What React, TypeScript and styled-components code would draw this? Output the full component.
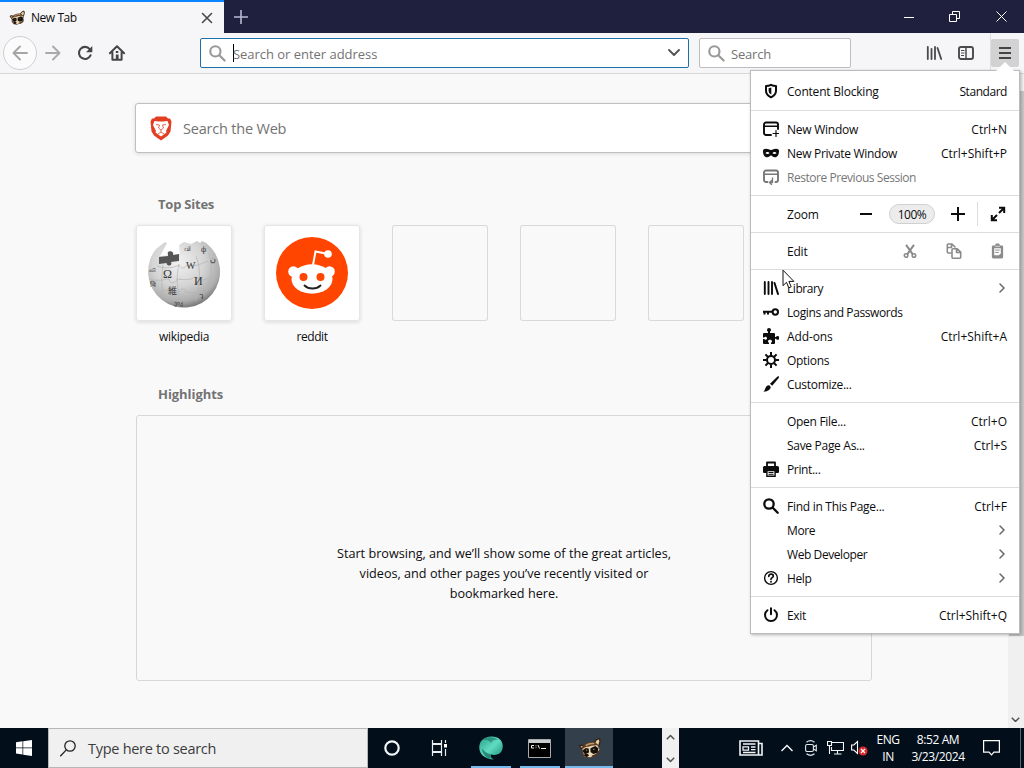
import React from "react";
import styled, { createGlobalStyle } from "styled-components";

const Global = createGlobalStyle`
  * { box-sizing: border-box; }
  html, body { margin: 0; padding: 0; overflow: hidden; }
  body { font-family: "Open Sans", "Noto Sans", sans-serif; font-size: 12px; color: #0c0c0d; }
  svg { display: block; flex: none; }
`;

const Screen = styled.div`
  position: relative;
  width: 1024px;
  height: 768px;
  display: flex;
  flex-direction: column;
  background: #f9f9fa;
  overflow: hidden;
`;

const Label = styled.span<{ $track?: number }>`
  white-space: nowrap;
  letter-spacing: ${(p) => p.$track ?? 0}px;
`;

/* ---------- tab strip ---------- */
const TabStrip = styled.header`
  display: flex;
  height: 33px;
  flex: none;
  background: #1e203d;
`;
const Tab = styled.div`
  width: 224px;
  display: flex;
  align-items: center;
  padding: 0 11px 0 9px;
  border-top: 2px solid #0a84ff;
  background: #f6f6f8;
`;
const TabTitle = styled(Label)`
  flex: 1;
  margin-left: 6px;
`;
const NewTab = styled.div`
  width: 33px;
  display: grid;
  place-items: center;
`;
const WindowButtons = styled.div`
  margin-left: auto;
  display: flex;
`;
const WindowButton = styled.div`
  width: 46px;
  display: grid;
  place-items: center;
`;

/* ---------- navigation bar ---------- */
const NavBar = styled.nav`
  display: flex;
  align-items: center;
  height: 41px;
  flex: none;
  padding: 0 5px 0 3px;
  background: #f6f6f8;
  border-bottom: 1px solid #d8d8da;
`;
const BackButton = styled.div`
  width: 34px;
  height: 34px;
  border: 1px solid #cfcfd1;
  border-radius: 50%;
  display: grid;
  place-items: center;
  background: #fbfbfc;
`;
const NavButton = styled.div`
  width: 32px;
  height: 28px;
  display: grid;
  place-items: center;
`;
const Field = styled.div<{ $width: number; $left: number; $focused?: boolean }>`
  width: ${(p) => p.$width}px;
  height: 30px;
  margin-left: ${(p) => p.$left}px;
  display: flex;
  align-items: center;
  padding: 0 8px;
  border: 1px solid ${(p) => (p.$focused ? "#1f6fa8" : "#bdbdbf")};
  border-radius: 2px;
  background: #fff;
  color: #737373;
  font-size: 13px;
`;
const Caret = styled.i`
  width: 1px;
  height: 18px;
  margin-left: 7px;
  background: #000;
`;
const FieldText = styled(Label)<{ $gap?: number }>`
  flex: 1;
  margin-left: ${(p) => p.$gap ?? 0}px;
  padding-top: 2px;
`;
const ToolGroup = styled.div`
  margin-left: auto;
  display: flex;
  align-items: center;
`;
const MenuHolder = styled.div`
  height: 40px;
  margin-left: 8px;
  padding: 6px 0 0;
  border-left: 1px solid #dededf;
`;
const MenuButton = styled.div`
  width: 28px;
  height: 28px;
  display: grid;
  place-items: center;
  border-radius: 2px;
  background: #d2d2d3;
`;

/* ---------- page ---------- */
const Page = styled.div`
  display: flex;
  flex: 1;
  min-height: 0;
`;
const Content = styled.main`
  width: 1008px;
  padding: 29px 0 0 136px;
  background: #f9f9fa;
`;
const WebSearch = styled.div`
  display: flex;
  align-items: center;
  width: 738px;
  height: 50px;
  margin-left: -1px;
  padding-left: 14px;
  gap: 11px;
  background: #fff;
  border: 1px solid #bfbfc0;
  border-radius: 3px;
  box-shadow: 0 1px 4px rgba(12, 12, 13, 0.12);
  color: #737373;
  font-size: 14.5px;
`;
const SectionTitle = styled.h2<{ $top: number; $track: number }>`
  height: 18px;
  margin: ${(p) => p.$top}px 0 0 22px;
  font-size: 13px;
  line-height: 18px;
  font-weight: 700;
  color: #737373;
  letter-spacing: ${(p) => p.$track}px;
`;
const Sites = styled.div`
  display: flex;
  gap: 32px;
  margin-top: 12px;
`;
const Site = styled.div`
  width: 96px;
  height: 125px;
  display: flex;
  flex-direction: column;
  align-items: center;
  gap: 7px;
`;
const Tile = styled.div<{ $empty?: boolean }>`
  width: 96px;
  height: 96px;
  flex: none;
  display: grid;
  place-items: center;
  border-radius: 3px;
  background: ${(p) => (p.$empty ? "transparent" : "#fff")};
  box-shadow: ${(p) =>
    p.$empty
      ? "inset 0 0 0 1px #d9d9da"
      : "inset 0 0 0 1px #e6e6e7, 0 1px 4px rgba(12,12,13,0.14)"};
`;
const EmptyHighlights = styled.section`
  width: 736px;
  height: 266px;
  margin-top: 12px;
  border: 1px solid #d7d7db;
  border-radius: 3px;
  padding-top: 127px;
  display: flex;
  flex-direction: column;
  align-items: center;
  font-size: 12.65px;
  line-height: 20px;
`;
const ScrollBar = styled.div`
  width: 16px;
  display: flex;
  flex-direction: column;
  align-items: center;
  background: #f0f0f0;
  padding-top: 17px;
`;
const Thumb = styled.div`
  width: 15px;
  height: 545px;
  margin-bottom: auto;
  background: #c6c6c7;
`;
const ScrollArrow = styled.div`
  width: 16px;
  height: 17px;
  padding-right: 2px;
  display: grid;
  place-items: center;
`;

/* ---------- application menu ---------- */
const Menu = styled.aside`
  position: absolute;
  left: 750px;
  top: 70px;
  width: 270px;
  height: 564px;
  background: #fff;
  border: 1px solid #bcbcbd;
  box-shadow: 1px 1px 3px rgba(0, 0, 0, 0.28);
`;
const MenuArrow = styled.svg`
  position: absolute;
  right: 4px;
  top: -9px;
`;
const MenuSection = styled.div<{ $first?: boolean }>`
  padding: ${(p) => (p.$first ? "8px 0 7px" : "6px 0")};
  & + & { border-top: 1px solid #dcdcdd; }
`;
const MenuRow = styled.div<{ $disabled?: boolean }>`
  display: flex;
  align-items: center;
  height: 24px;
  padding: 0 12px;
  color: ${(p) => (p.$disabled ? "#777" : "#0c0c0d")};
`;
const IconCell = styled.span`
  width: 16px;
  height: 16px;
  margin-right: 8px;
`;
const MenuText = styled(Label)`
  flex: 1;
  padding-top: 1px;
`;
const EditText = styled(MenuText)`
  color: #0c0c0d;
`;
const Keys = styled(Label)`
  padding-top: 1px;
`;
const Chevron = styled.span`
  margin-right: 0;
`;
const ControlCell = styled.span<{ $width: number; $line?: boolean }>`
  width: ${(p) => p.$width}px;
  height: 24px;
  display: grid;
  place-items: center;
  border-left: ${(p) => (p.$line ? "1px solid #dcdcdd" : "0")};
  padding-left: ${(p) => (p.$line ? 11 : 0)}px;
`;
const ZoomValue = styled.span`
  width: 46px;
  height: 20px;
  line-height: 19px;
  text-align: center;
  border: 1px solid #d0d0d1;
  border-radius: 10px;
  background: #ececed;
  letter-spacing: -0.5px;
`;
const Pointer = styled.svg`
  position: absolute;
  left: 782px;
  top: 269px;
`;

/* ---------- taskbar ---------- */
const TaskBar = styled.footer`
  display: flex;
  height: 40px;
  flex: none;
  background: #020f1b;
  color: #fff;
`;
const Start = styled.div`
  width: 48px;
  display: grid;
  place-items: center;
`;
const TaskSearch = styled.div`
  width: 320px;
  display: flex;
  align-items: center;
  gap: 12px;
  padding-left: 11px;
  border: 1px solid #b7b7b7;
  background: #f0f0f0;
  color: #3c3c3c;
  font-size: 14.5px;
`;
const TaskItem = styled.div<{ $width?: number; $active?: boolean; $open?: boolean }>`
  width: ${(p) => p.$width ?? 48}px;
  display: grid;
  place-items: center;
  background: ${(p) => (p.$active ? "#33404b" : "transparent")};
  box-shadow: ${(p) => (p.$open ? "inset 0 -2px 0 #76b9ed" : "none")};
`;
const AppGroup = styled.div`
  display: flex;
  margin-left: 7px;
`;
const TaskScroll = styled.div`
  width: 17px;
  margin-left: 49px;
  display: flex;
  flex-direction: column;
  justify-content: space-between;
  align-items: center;
  padding: 6px 0 5px;
  background: #f0f0f0;
`;
const Tray = styled.div`
  margin-left: auto;
  display: flex;
  align-items: center;
`;
const TrayIcon = styled.div<{ $right: number }>`
  margin-right: ${(p) => p.$right}px;
`;
const TrayText = styled.div<{ $width: number; $track: number }>`
  width: ${(p) => p.$width}px;
  text-align: center;
  font-size: 12px;
  line-height: 17px;
  white-space: nowrap;
  letter-spacing: ${(p) => p.$track}px;
`;
const NoticeIcon = styled(TrayIcon)`
  margin-left: 12px;
`;
const DesktopEdge = styled.div`
  width: 4px;
  height: 40px;
  border-left: 1px solid #5c6670;
`;

/* ---------- drawings ---------- */
const line = { fill: "none", stroke: "currentColor", strokeLinecap: "round", strokeLinejoin: "round" } as const;

const Raccoon = ({ size }: { size: number }) => (
  <svg width={size} height={size} viewBox="0 0 24 24">
    <path d="M16.500 7 19 3 22.500 1.500 23 5 21.500 9.500z" fill="#e9cfa4" stroke="#33241a" strokeWidth="1.400" />
    <path d="M1.500 9 5 8.500l2 2-3 2.500z" fill="#d9b98b" stroke="#33241a" strokeWidth="1.400" />
    <path d="M4 10.500C7 6.500 12 4.500 18 5.500l3.500 3 1 5-3.500 5-7 3.500-5-.5-3-4z" fill="#5a3d27" />
    <path d="M8 9C11 7 14 6.500 17 7" fill="none" stroke="#c79b66" strokeWidth="1.400" />
    <path d="M4.500 13c2-2.200 4-3 6.500-2.700l3-1.300L20 8.500l2.500 4.500-3 4.500-6.500 3.500-6-.5z" fill="#ecd8b4" />
    <path d="M4.500 14 8 11.500l3.200.5.300 4.200L7 18zM13 11.700l5-2.200 3.300 2.300-.8 4.700-4.500 1.200-3-2z" fill="#17110d" />
    <path d="m14 19.500 5-2 3.500-4.500-1 5-4.500 3z" fill="#4f3423" />
    <ellipse cx="8.800" cy="19" rx="2.300" ry="1.900" fill="#18110d" />
    <circle cx="9" cy="13.600" r=".6" fill="#d9c8a8" />
    <circle cx="16.500" cy="12.900" r=".6" fill="#d9c8a8" />
  </svg>
);

const Loupe = ({ size = 18, w = 2.2 }: { size?: number; w?: number }) => (
  <svg width={size} height={size} viewBox="0 0 16 16">
    <g {...line} strokeWidth={w}>
      <circle cx="6" cy="6" r="4.7" />
      <path d="m9.7 9.7 5 5" />
    </g>
  </svg>
);

const Books = () => (
  <svg width="16" height="16" viewBox="0 0 16 16">
    <g {...line} strokeWidth="2">
      <path d="M1.800 2v12M5.500 2v12M9 2v12" strokeWidth="1.900" />
      <path d="m11.500 3 3.500 11" />
    </g>
  </svg>
);

const icons: Record<string, React.ReactNode> = {
  shield: (
    <>
      <path d="M8 1.800c1.700.9 3.400 1.200 5 1.200v4.800c0 3-2 5.100-5 6.500-3-1.400-5-3.500-5-6.500V3c1.600 0 3.300-.3 5-1.200z" {...line} strokeWidth="2" />
      <path d="M8.300 4.500v7.100C6.500 10.500 5.600 9.500 5.600 7.500V5.200z" fill="currentColor" />
    </>
  ),
  window: (
    <g {...line} strokeWidth="1.900">
      <path d="M8 14H3a2 2 0 0 1-2-2V3.500a2 2 0 0 1 2-2h10a2 2 0 0 1 2 2V8" />
      <path d="M1.500 5.300h13" strokeWidth="1.400" />
      <path d="M13 9.500v6M10 12.500h6" strokeWidth="1.200" />
    </g>
  ),
  mask: (
    <path
      fillRule="evenodd"
      fill="currentColor"
      d="M0 6c0-1.500 1.200-2.300 3-2.300 2.200 0 3.200 1.200 5 1.200s2.800-1.200 5-1.200c1.800 0 3 .8 3 2.300 0 3.800-1.500 6.300-4 6.300-2.200 0-2.800-1.800-4-1.800s-1.800 1.800-4 1.800C1.500 12.300 0 9.800 0 6zm2.500 2.300c.8 1 3.300 1 4 0C5.700 6.500 3.300 6.500 2.500 8.300zm7 0c.7 1 3.200 1 4 0-.8-1.800-3.200-1.800-4 0z"
    />
  ),
  restore: (
    <g {...line} strokeWidth="1.900">
      <path d="M4.500 13H3a2 2 0 0 1-2-2V3.500a2 2 0 0 1 2-2h10a2 2 0 0 1 2 2V11a2 2 0 0 1-2 2h-.5" />
      <path d="M1.500 5.300h13" strokeWidth="1.400" />
      <path d="M9.500 9v4.500H7M8.500 11.500l-2 2 2 2" strokeWidth="1.300" />
    </g>
  ),
  key: (
    <g {...line} strokeWidth="2" strokeLinecap="butt">
      <circle cx="12.300" cy="8" r="2.700" />
      <path d="M0 7.700h9.500M1.500 8v2.500M5 8v2.500" />
    </g>
  ),
  puzzle: (
    <path
      fill="currentColor"
      d="M5 5V3.600C4.200 3.200 4 2.700 4 2a2 2 0 0 1 4 0c0 .7-.3 1.200-1 1.600V5h4a1 1 0 0 1 1 1v3h1c.3-.7.8-1 1.500-1a1.800 1.800 0 0 1 0 3.800c-.7 0-1.200-.3-1.500-1h-1V15a1 1 0 0 1-1 1H8v-1.300c.7-.3 1-.8 1-1.300 0-1-.8-1.700-2-1.700s-2 .7-2 1.700c0 .5.300 1 1 1.300V16H1a1 1 0 0 1-1-1v-4h1.200c.3.500.8.8 1.300.8.900 0 1.500-.7 1.500-1.500s-.6-1.500-1.500-1.500c-.5 0-1 .300-1.300.8H0V6a1 1 0 0 1 1-1z"
    />
  ),
  gear: (
    <g {...line} strokeLinecap="butt">
      <circle cx="8" cy="8" r="4" strokeWidth="2" />
      <path d="M8 0v3.500M8 12.500V16M0 8h3.500M12.500 8H16M2.400 2.400l2.400 2.400M11.200 11.200l2.400 2.400M13.600 2.400l-2.400 2.400M4.800 11.200l-2.400 2.400" strokeWidth="2" />
    </g>
  ),
  brush: (
    <>
      <path d="M15.800.3c.5.5.2 1.400-.3 2L9.200 9.700 7 7.700 14 .900c.5-.5 1.300-1 1.800-.6z" fill="currentColor" />
      <path d="M5.600 9.300c1.300.2 2 1 2.100 2.200-.7 2.500-3.600 4.200-7.400 4.200C2 14.500 1.900 13.300 2.600 11.800c.6-1.400 1.600-2.200 3-2.500z" fill="currentColor" />
    </>
  ),
  printer: (
    <>
      <path d="M4 5V1.500h8V5" {...line} strokeWidth="1.800" />
      <path d="M1.500 5h13A1.500 1.500 0 0 1 16 6.500V11a1 1 0 0 1-1 1H1a1 1 0 0 1-1-1V6.500A1.500 1.500 0 0 1 1.500 5z" fill="currentColor" />
      <path d="M3.900 9.500h8.200v5.700H3.900z" fill="#fff" stroke="currentColor" strokeWidth="1.400" />
      <path d="M5.500 11.500h5M5.500 13.300h5" stroke="currentColor" />
    </>
  ),
  help: (
    <g {...line}>
      <circle cx="8" cy="8" r="6.400" strokeWidth="1.400" />
      <path d="M5.800 6.300c0-2.900 4.500-2.600 4.500-.2C10.300 7.800 8 7.500 8 9.300" strokeWidth="1.700" />
      <path d="M8 11.700v.1" strokeWidth="1.900" />
    </g>
  ),
  power: (
    <g {...line} strokeWidth="2">
      <path d="M4.500 3.200a6 6 0 1 0 7 0M8 1.200v6" />
    </g>
  ),
};

const MenuGlyph = ({ name }: { name?: string }) => {
  if (!name) return null;
  if (name === "library") return <Books />;
  if (name === "find") return <Loupe size={16} w={2.3} />;
  return <svg width="16" height="16" viewBox="0 0 16 16">{icons[name]}</svg>;
};

const RightChevron = () => (
  <svg width="10" height="12" viewBox="0 0 10 12">
    <path d="m3 2 4 4-4 4" {...line} stroke="#666" strokeWidth="1.500" />
  </svg>
);

const VChevron = ({ up, color = "#505050", w = 9 }: { up?: boolean; color?: string; w?: number }) => (
  <svg width={w} height={w * 0.66} viewBox="0 0 12 8">
    <path d={up ? "m1 7 5-5 5 5" : "m1 1 5 5 5-5"} {...line} stroke={color} strokeWidth="2" strokeLinecap="butt" />
  </svg>
);

const Wikipedia = () => (
  <svg width="76" height="76" viewBox="0 0 76 76">
    <defs>
      <radialGradient id="globe" cx=".42" cy=".32" r=".72">
        <stop offset="0" stopColor="#f1f1f1" />
        <stop offset=".5" stopColor="#d4d4d4" />
        <stop offset=".82" stopColor="#acacac" />
        <stop offset="1" stopColor="#686868" />
      </radialGradient>
    </defs>
    <path d="M60 8A36 36 0 1 1 10 14L19 7l2 1-3 6-4 7 12-1 8-1-1-9 5-3 7 2 6-3 3 2 2-2z" fill="url(#globe)" />
    <path d="M13 22l9-1c0-2-1-4 1-4.500 3-.8 5 1 4 3.500l6-1v7l-8 1c2 4-4 5-4.500 1l-7.500 1z" fill="#565656" />
    <g fill="none" stroke="#b3b3b3" strokeWidth=".7">
      <path d="M11 31c8 3 17 2 22-1 2 4 5 4 8 0 8 2 14-1 21-4M3 44c10 3 15 0 20 0 0 5 7 5 8 0 8 1 14 1 18-2 6 4 10 4 17-1M13 57c8-3 13-2 20 0 3-5 7-3 7 0 9 2 16 0 25-7M17 30c-1 9-2 17 0 30M33 29c-3 13-2 24 1 39M50 21c5 13 4 26 0 45M63 18c4 13 2 28-3 39" />
    </g>
    <g fill="#363636" fontFamily="Liberation Serif, serif" fontSize="12">
      <text x="17" y="43">Ω</text>
      <text x="40" y="34" fontSize="10">W</text>
      <text x="48" y="50" fontSize="12">И</text>
      <text x="22" y="59" fontSize="9" fontFamily="Noto Sans CJK JP, sans-serif">維</text>
      <text x="3" y="37" fontSize="6">வி</text>
      <text x="55" y="17" fontSize="8">ф</text>
      <text x="64" y="27" fontSize="8">ن</text>
      <text x="53" y="64" fontSize="8">ว</text>
      <text x="38" y="16" fontSize="6">വി</text>
      <text x="4" y="52" fontSize="7">वि</text>
      <text x="28" y="70" fontSize="6">უიკ</text>
    </g>
  </svg>
);

const Reddit = () => (
  <svg width="72" height="72" viewBox="0 0 72 72">
    <circle cx="36" cy="36" r="36" fill="#ff4500" />
    <circle cx="17.500" cy="34.500" r="5.300" fill="#fff" />
    <circle cx="53.500" cy="34.500" r="5.300" fill="#fff" />
    <ellipse cx="36" cy="42" rx="20.500" ry="14.700" fill="#fff" />
    <path d="M37 28 39.500 14.500 52 17" fill="none" stroke="#fff" strokeWidth="2" />
    <circle cx="52" cy="17" r="3.800" fill="#fff" />
    <circle cx="27.500" cy="40" r="4" fill="#ff4500" />
    <circle cx="44.500" cy="40" r="4" fill="#ff4500" />
    <path d="M28.500 48.500c4 4 12 4 16 0" fill="none" stroke="#222" strokeWidth="1.800" strokeLinecap="round" />
  </svg>
);

const Brave = () => (
  <svg width="22" height="25" viewBox="0 0 22 25">
    <path d="m6 .5h10l2 2h2l1.500 3-1 10-2.500 4-7 5-7-5-2.500-4-1-10L2 2.500h2z" fill="#e23e22" />
    <path d="m4.500 5 4.500.6h4l4.500-.6 1.500 4-3 6 .5 1.500-5.500 4-5.500-4L6 15 3 9z" fill="#fff" />
    <path d="m6 8.500 3.500.5M16 8.500l-3.500.5M9.500 9l-1 3 2.500 2 2.500-2-1-3M8 18l3-2 3 2M11 14v2" fill="none" stroke="#e2593f" strokeWidth=".9" />
  </svg>
);

/* ---------- menu data ---------- */
type Item = { text: string; icon?: string; keys?: string; sub?: boolean; disabled?: boolean; track?: number; kt?: number };

const upper: Item[][] = [
  [{ text: "Content Blocking", icon: "shield", keys: "Standard", kt: -0.45 }],
  [
    { text: "New Window", icon: "window", keys: "Ctrl+N", track: -0.25 },
    { text: "New Private Window", icon: "mask", keys: "Ctrl+Shift+P", track: -0.3 },
    { text: "Restore Previous Session", icon: "restore", disabled: true, track: -0.45 },
  ],
];
const lower: Item[][] = [
  [
    { text: "Library", icon: "library", sub: true, track: -0.45 },
    { text: "Logins and Passwords", icon: "key", track: -0.4 },
    { text: "Add-ons", icon: "puzzle", keys: "Ctrl+Shift+A", track: -0.1 },
    { text: "Options", icon: "gear", track: -0.3 },
    { text: "Customize...", icon: "brush", track: -0.3 },
  ],
  [
    { text: "Open File...", keys: "Ctrl+O", track: -0.3 },
    { text: "Save Page As...", keys: "Ctrl+S", track: -0.3 },
    { text: "Print...", icon: "printer", track: -0.35 },
  ],
  [
    { text: "Find in This Page...", icon: "find", keys: "Ctrl+F", track: -0.28 },
    { text: "More", sub: true, track: -0.4 },
    { text: "Web Developer", sub: true, track: -0.42 },
    { text: "Help", icon: "help", sub: true, track: -0.4 },
  ],
  [{ text: "Exit", icon: "power", keys: "Ctrl+Shift+Q", track: -0.3 }],
];

const Section = ({ items, first }: { items: Item[]; first?: boolean }) => (
  <MenuSection $first={first}>
    {items.map((it) => (
      <MenuRow key={it.text} $disabled={it.disabled}>
        <IconCell><MenuGlyph name={it.icon} /></IconCell>
        <MenuText $track={it.track ?? -0.2}>{it.text}</MenuText>
        {it.keys && <Keys $track={it.kt ?? 0}>{it.keys}</Keys>}
        {it.sub && <Chevron><RightChevron /></Chevron>}
      </MenuRow>
    ))}
  </MenuSection>
);

export default function App() {
  return (
    <Screen>
      <Global />
      <TabStrip>
        <Tab>
          <Raccoon size={16} />
          <TabTitle $track={-0.45}>New Tab</TabTitle>
          <svg width="12" height="12" viewBox="0 0 12 12"><path d="m1.500 1.500 9 9m0-9-9 9" {...line} stroke="#484848" strokeWidth="1.600" /></svg>
        </Tab>
        <NewTab>
          <svg width="14" height="14" viewBox="0 0 14 14"><path d="M7 0v14M0 7h14" stroke="#b9bad0" strokeWidth="1.600" /></svg>
        </NewTab>
        <WindowButtons>
          <WindowButton><svg width="10" height="10"><path d="M0 5.500h10" stroke="#fff" /></svg></WindowButton>
          <WindowButton>
            <svg width="12" height="11"><path d="M.5 3.500h7v7h-7zM3.500 3.500v-3h7v7h-3" fill="none" stroke="#fff" /></svg>
          </WindowButton>
          <WindowButton><svg width="11" height="11"><path d="m.5.500 10 10m0-10-10 10" stroke="#fff" /></svg></WindowButton>
        </WindowButtons>
      </TabStrip>

      <NavBar>
        <BackButton>
          <svg width="16" height="16" viewBox="0 0 16 16"><path d="M15 8H1.500M8 1.500 1.500 8 8 14.500" {...line} stroke="#a5a5a6" strokeWidth="1.900" /></svg>
        </BackButton>
        <NavButton>
          <svg width="16" height="16" viewBox="0 0 16 16"><path d="M1 8h13.500M8 1.500 14.500 8 8 14.500" {...line} stroke="#a9a9aa" strokeWidth="1.900" /></svg>
        </NavButton>
        <NavButton>
          <svg width="16" height="16" viewBox="0 0 16 16">
            <path d="M12.700 4.200A6 6 0 1 0 13.500 10.300" {...line} stroke="#454546" strokeWidth="2.100" />
            <path d="M15.300 1v6.300H9z" fill="#454546" />
          </svg>
        </NavButton>
        <NavButton>
          <svg width="16" height="16" viewBox="0 0 16 16">
            <path d="m.9 8.200 7.100-7 7.100 7M3.400 7.500v7.200h9.200V7.500" {...line} stroke="#454546" strokeWidth="2" />
            <path d="M6.800 14.500v-5h2.800v5z" fill="#454546" /><path d="M6.800 6h2.500v2H6.800z" fill="#454546" />
          </svg>
        </NavButton>
        <Field $width={489} $left={67} $focused>
          <svg width="17" height="17" viewBox="0 0 16 16"><g {...line} stroke="#999" strokeWidth="2"><circle cx="6" cy="6" r="4.800" /><path d="m9.700 9.700 5 5" /></g></svg>
          <Caret />
          <FieldText $gap={-1} $track={-0.03}>Search or enter address</FieldText>
          <svg width="12" height="8" viewBox="0 0 12 8"><path d="m1 1 5 5 5-5" {...line} stroke="#555" strokeWidth="1.900" /></svg>
        </Field>
        <Field $width={152} $left={10}>
          <svg width="17" height="17" viewBox="0 0 16 16"><g {...line} stroke="#999" strokeWidth="2"><circle cx="6" cy="6" r="4.800" /><path d="m9.700 9.700 5 5" /></g></svg>
          <FieldText $gap={6} $track={-0.2}>Search</FieldText>
        </Field>
        <ToolGroup>
          <NavButton>
            <svg width="16" height="16" viewBox="0 0 16 16"><g {...line} stroke="#4a4a4b" strokeWidth="1.800"><path d="M1.800 2v12M5.500 4v10M9 2v12M11.500 3l3.700 11" /></g></svg>
          </NavButton>
          <NavButton>
            <svg width="16" height="16" viewBox="0 0 16 16">
              <rect x="1" y="2" width="14" height="12" rx="2" {...line} stroke="#4a4a4b" strokeWidth="1.900" />
              <path d="M8 2v12" stroke="#4a4a4b" strokeWidth="1.500" /><path d="M3 5.500h3.500M3 8h3.500M3 10.500h3" stroke="#4a4a4b" />
            </svg>
          </NavButton>
          <MenuHolder>
            <MenuButton>
              <svg width="12" height="12" viewBox="0 0 12 12"><path d="M0 1h12M0 6h12M0 11h12" stroke="#444" strokeWidth="1.900" /></svg>
            </MenuButton>
          </MenuHolder>
        </ToolGroup>
      </NavBar>

      <Page>
        <Content>
          <WebSearch><Brave /><Label $track={-0.2}>Search the Web</Label></WebSearch>
          <SectionTitle $top={42} $track={-0.22}>Top Sites</SectionTitle>
          <Sites>
            <Site><Tile><Wikipedia /></Tile><Label $track={-0.3}>wikipedia</Label></Site>
            <Site><Tile><Reddit /></Tile><Label $track={-0.4}>reddit</Label></Site>
            <Site><Tile $empty /></Site>
            <Site><Tile $empty /></Site>
            <Site><Tile $empty /></Site>
          </Sites>
          <SectionTitle $top={35} $track={-0.05}>Highlights</SectionTitle>
          <EmptyHighlights>
            <Label>Start browsing, and we’ll show some of the great articles,</Label>
            <Label>videos, and other pages you’ve recently visited or</Label>
            <Label>bookmarked here.</Label>
          </EmptyHighlights>
        </Content>
        <ScrollBar>
          <Thumb />
          <ScrollArrow><VChevron /></ScrollArrow>
        </ScrollBar>
      </Page>

      <TaskBar>
        <Start>
          <svg width="16" height="16" viewBox="0 0 16 16"><path d="m0 2.200 6.500-.9v6.200H0zM7.200 1.200 16 0v7.500H7.200zM0 8.300h6.500v6.200L0 13.600zM7.200 8.300H16V16l-8.800-1.300z" fill="#fff" /></svg>
        </Start>
        <TaskSearch>
          <svg width="16" height="17" viewBox="0 0 16 17"><circle cx="10" cy="6" r="5.200" fill="none" stroke="#222" strokeWidth="1.300" /><path d="m6.300 9.900-6 6.300" stroke="#222" strokeWidth="1.300" /></svg>
          <Label $track={-0.28}>Type here to search</Label>
        </TaskSearch>
        <TaskItem><svg width="16" height="16"><circle cx="8" cy="8" r="6.700" fill="none" stroke="#f1f5f7" strokeWidth="2.200" /></svg></TaskItem>
        <TaskItem>
          <svg width="18" height="16" viewBox="0 0 18 16"><path d="M1.500 0v3.500h9V0M1.500 16v-3.500h9V16M1.500 4.500h9v7h-9zM14.500 0v3M14.500 9v7" fill="none" stroke="#e8edf0" strokeWidth="1.200" /><path d="M13 4h3v3.500h-3z" fill="#fff" /></svg>
        </TaskItem>
        <AppGroup>
          <TaskItem $width={40} $open>
            <svg width="24" height="24" viewBox="0 0 24 24">
              <defs><linearGradient id="leaf" x2="1" y2="1"><stop stopColor="#2a9c8a" /><stop offset=".5" stopColor="#5fdcc0" /><stop offset="1" stopColor="#148779" /></linearGradient></defs>
              <path d="M12 .5c7-.5 12 4 11.700 10C23.500 17 19 20 12 18.500c-1 2 0 3.500 3 5C5 23-1 17 .5 9 1.500 4 6 .8 12 .500z" fill="url(#leaf)" />
              <path d="M3 4C7 1 14 0 19 4c-3-1-6 0-7 3-2-3-5-3.500-9-3z" fill="#187468" opacity=".6" />
              <path d="M12 18.500c-4-1-7-3-9-6 0 5 4 10 9 10.500-1.200-1.500-1-3 0-4.500z" fill="#17695f" opacity=".7" />
            </svg>
          </TaskItem>
          <TaskItem $width={9} />
          <TaskItem $width={40} $open>
            <svg width="24" height="19" viewBox="0 0 24 19">
              <path d="M.5.500h22v18H.5z" fill="#000" stroke="#aaa" /><path d="M1 1h21v3H1z" fill="#c8cdd0" />
              <path d="M6 6.500H3.500V9H6M8 6.500v.8M8 8.500v.7M10 6l1.500 3.500M13 9.500h5" fill="none" stroke="#eee" />
            </svg>
          </TaskItem>
          <TaskItem $width={5} />
          <TaskItem $active $open><Raccoon size={23} /></TaskItem>
        </AppGroup>
        <TaskScroll><VChevron up /><VChevron /></TaskScroll>
        <Tray>
          <TrayIcon $right={18}>
            <svg width="24" height="16" viewBox="0 0 24 16"><path d="M1 1h18.500v14H1zM19.500 3.500H23V15h-4" fill="none" stroke="#f2f4f5" strokeWidth="1.600" /><path d="M4 4h12.500M4 12.500h12.500M12 7h4.500M12 9.700h4.500" stroke="#f2f4f5" strokeWidth="1.300" /><path d="M4 6.800h5.500v3.400H4z" fill="none" stroke="#f2f4f5" strokeWidth="1.300" /></svg>
          </TrayIcon>
          <TrayIcon $right={12}><svg width="12" height="8" viewBox="0 0 12 8"><path d="m.5 7 5.500-5.500L11.500 7" fill="none" stroke="#fff" strokeWidth="1.300" /></svg></TrayIcon>
          <TrayIcon $right={10}>
            <svg width="12" height="16" viewBox="0 0 12 16"><g fill="none" stroke="#e5e8ea" strokeWidth="1.100"><rect x=".6" y="4.500" width="7.800" height="7" rx="1.500" /><path d="m8.500 7 2.800-1.800v5.600L8.500 9M1.500 2.200C4 .3 7 .3 9.500 2.200M1.500 13.800c2.500 1.900 5.500 1.900 8 0" /></g></svg>
          </TrayIcon>
          <TrayIcon $right={7}>
            <svg width="17" height="14" viewBox="0 0 17 14"><path d="M5 1.500h11.500v8H4.500V6M10.500 9.500v3.500M7 13h7.500M.5.500h4v4h-4zM2.500 4.500V13" fill="none" stroke="#f1f3f4" strokeWidth="1.100" /></svg>
          </TrayIcon>
          <TrayIcon $right={3}>
            <svg width="17" height="16" viewBox="0 0 17 16"><path d="M.6 5h2.200l3.700-3.500v12L2.800 10H.600z" fill="none" stroke="#fff" strokeWidth="1.100" /><circle cx="12" cy="11" r="4.600" fill="#d9292b" /><path d="m10 9 4 4m0-4-4 4" stroke="#fff" strokeWidth="1.200" /></svg>
          </TrayIcon>
          <TrayText $width={34} $track={-0.4}>ENG<br />IN</TrayText>
          <TrayText $width={66} $track={-0.4}>8:52 AM<br />3/23/2024</TrayText>
          <NoticeIcon $right={20}>
            <svg width="17" height="16" viewBox="0 0 17 16"><path d="M.6.600h15.800v11.500H11l-2.500 2.700L6 12.100H.600z" fill="none" stroke="#fff" strokeWidth="1.200" /></svg>
          </NoticeIcon>
          <DesktopEdge />
        </Tray>
      </TaskBar>

      <Menu>
        <MenuArrow width="20" height="10" viewBox="0 0 20 10"><path d="M0 10 10 0l10 10z" fill="#fff" /></MenuArrow>
        {upper.map((s, i) => <Section key={i} items={s} first={i === 0} />)}
        <MenuSection>
          <MenuRow>
            <IconCell />
            <MenuText $track={-0.2}>Zoom</MenuText>
            <ControlCell $width={38}><svg width="12" height="12"><path d="M0 6h12" stroke="#0c0c0d" strokeWidth="2" /></svg></ControlCell>
            <ControlCell $width={54}><ZoomValue>100%</ZoomValue></ControlCell>
            <ControlCell $width={38}><svg width="14" height="14"><path d="M0 7h14M7 0v14" stroke="#0c0c0d" strokeWidth="2" /></svg></ControlCell>
            <ControlCell $width={30} $line>
              <svg width="16" height="16" viewBox="0 0 16 16"><path d="m9 7 5.500-5.500M9 1.800h5.200V7M7 9l-5.500 5.500M1.800 9v5.200H7" {...line} strokeWidth="2" strokeLinecap="butt" strokeLinejoin="miter" /></svg>
            </ControlCell>
          </MenuRow>
        </MenuSection>
        <MenuSection>
          <MenuRow>
            <IconCell />
            <EditText $track={-0.2}>Edit</EditText>
            <ControlCell $width={20}>
              <svg width="14" height="15" viewBox="0 0 16 16"><g {...line} stroke="#8b8b8c" strokeWidth="2.300" strokeLinecap="butt"><path d="M3.500.5 11 11M12.500.5 5 11" /><circle cx="3.500" cy="12.500" r="2" strokeWidth="1.800" /><circle cx="12.500" cy="12.500" r="2" strokeWidth="1.800" /></g></svg>
            </ControlCell>
            <ControlCell $width={68}>
              <svg width="16" height="16" viewBox="0 0 16 16"><g {...line} stroke="#8b8b8c" strokeWidth="1.600"><path d="M5 10H2.300a1 1 0 0 1-1-1V2a1 1 0 0 1 1-1H6l3 3M5.500 1.200V4.500H2" /><path d="M7 5.700h4l3.700 3.500v5a1 1 0 0 1-1 1H7a1 1 0 0 1-1-1V6.700a1 1 0 0 1 1-1zM10.500 6v3.500h4" /></g></svg>
            </ControlCell>
            <ControlCell $width={19}>
              <svg width="15" height="16" viewBox="0 0 16 16"><path d="M3.500 2H5l1.500-2h3L11 2h1.500A1.500 1.500 0 0 1 14 3.500v11a1.500 1.500 0 0 1-1.500 1.500h-9A1.500 1.500 0 0 1 2 14.500v-11A1.500 1.500 0 0 1 3.500 2z" fill="#8b8b8c" /><path d="M4.500 5h7v5.500L9.500 12.500h-5z" fill="#fff" /><path d="M5.500 3h5" stroke="#fff" strokeWidth=".7" /><path d="M5.500 7h5M5.500 9.500h4" stroke="#8b8b8c" /></svg>
            </ControlCell>
          </MenuRow>
        </MenuSection>
        {lower.map((s, i) => <Section key={i} items={s} />)}
      </Menu>

      <Pointer width="14" height="21" viewBox="0 0 14 21">
        <path d="M1 1.200v15.500l3.500-3.400 2.300 5.500 2.400-1-2.300-5.400h5z" fill="#fff" stroke="#111" strokeWidth="1" />
      </Pointer>
    </Screen>
  );
}
